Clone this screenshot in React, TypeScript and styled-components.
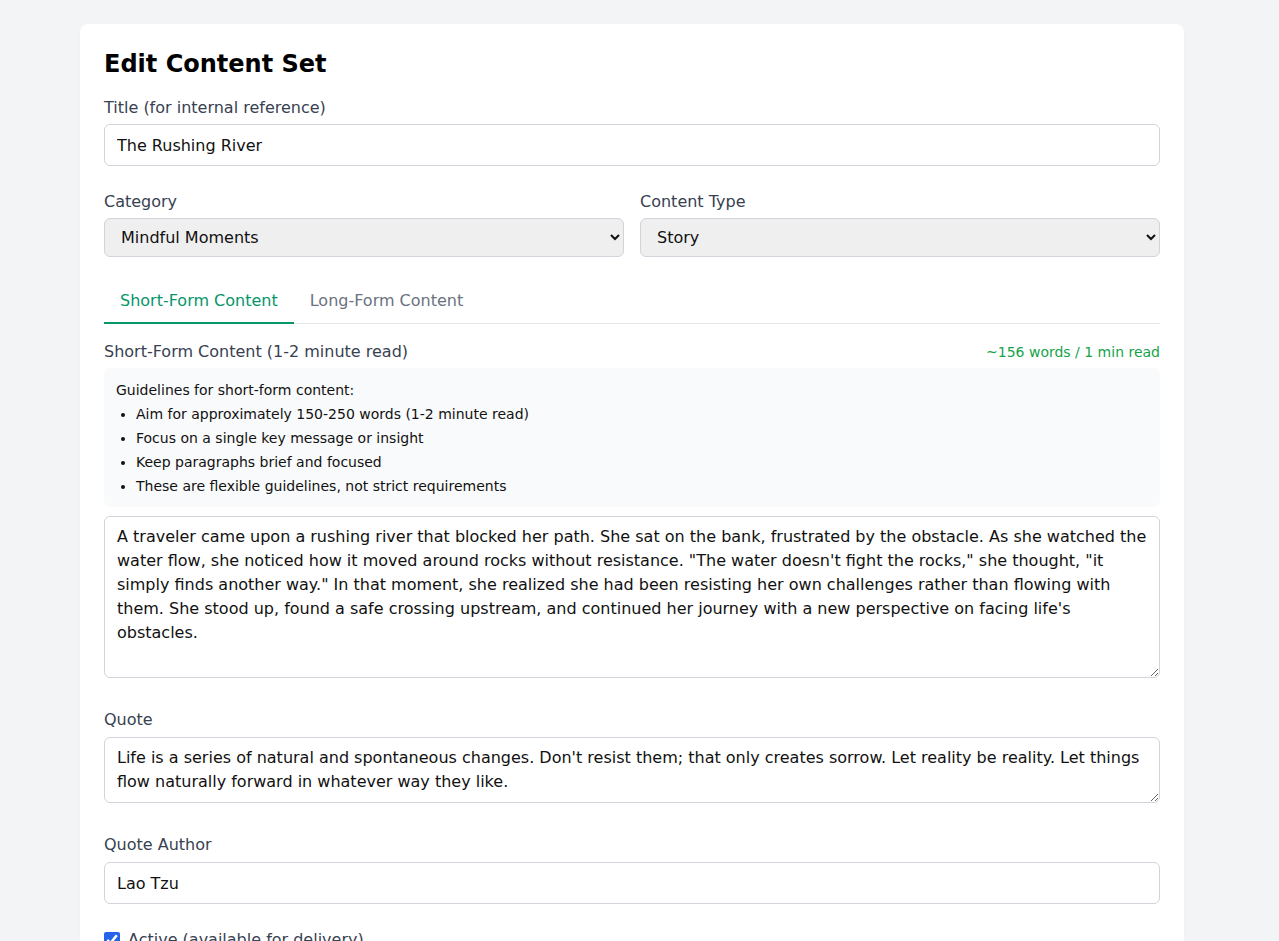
import React, { useState } from "react";
import styled, { createGlobalStyle } from "styled-components";

const GlobalStyle = createGlobalStyle`
  html, body {
    margin: 0;
    padding: 0;
    background: #f3f4f6;
  }
  body {
    padding-right: 15px;
    font-family: "DejaVu Sans", sans-serif;
    color: #111827;
  }
  * { box-sizing: border-box; }
`;

const Page = styled.div`
  max-width: 1152px;
  margin: 0 auto;
  padding: 24px;
`;

const Card = styled.div`
  background: #ffffff;
  border-radius: 8px;
  box-shadow: 0 1px 2px rgba(0, 0, 0, 0.04);
  padding: 24px;
`;

const Heading = styled.h1`
  margin: 0 0 16px;
  font-size: 24px;
  line-height: 32px;
  font-weight: 700;
  color: #000;
`;

const Field = styled.div<{ $mb?: number }>`
  margin-bottom: ${(p) => p.$mb ?? 24}px;
`;

const Label = styled.label<{ $gap?: number }>`
  display: block;
  font-size: 16px;
  line-height: 24px;
  color: #374151;
  margin-bottom: ${(p) => p.$gap ?? 5}px;
`;

const TextInput = styled.input`
  display: block;
  width: 100%;
  height: 42px;
  padding: 8px 12px;
  font-family: "DejaVu Sans", sans-serif;
  font-size: 16px;
  line-height: 24px;
  color: #111;
  border: 1px solid #d1d5db;
  border-radius: 6px;
  background: #fff;
  outline: none;
`;

const Grid = styled.div`
  display: grid;
  grid-template-columns: 1fr 1fr;
  gap: 16px;
  margin-bottom: 25px;
`;

const Select = styled.select`
  display: block;
  width: 100%;
  height: 39px;
  padding: 6px 12px;
  font-family: "DejaVu Sans", sans-serif;
  font-size: 16px;
  color: #111;
  border: 1px solid #d1d5db;
  border-radius: 6px;
  background-color: #efefef;
  outline: none;
`;

const Tabs = styled.div`
  display: flex;
  border-bottom: 1px solid #e5e7eb;
  margin-bottom: 16px;
`;

const Tab = styled.button<{ $active?: boolean }>`
  font-family: "DejaVu Sans", sans-serif;
  font-size: 16px;
  line-height: 24px;
  padding: 7px 16px 9px;
  background: none;
  border: none;
  margin-bottom: -1px;
  border-bottom: 2px solid ${(p) => (p.$active ? "#059669" : "transparent")};
  color: ${(p) => (p.$active ? "#059669" : "#6b7280")};
  cursor: pointer;
`;

const LabelRow = styled.div`
  display: flex;
  justify-content: space-between;
  align-items: baseline;
  margin-bottom: 4px;
`;

const RowLabel = styled.label`
  font-size: 16px;
  line-height: 24px;
  color: #374151;
`;

const Count = styled.span`
  font-size: 14px;
  line-height: 20px;
  color: #16a34a;
`;

const Guide = styled.div`
  background: #f9fafb;
  border-radius: 6px;
  padding: 12px 12px 11px;
  font-size: 14px;
  line-height: 20px;
  color: #111;
  margin-bottom: 9px;
`;

const GuideList = styled.ul`
  margin: 4px 0 0;
  padding-left: 20px;
  list-style: disc;
  li {
    margin-top: 4px;
  }
  li:first-child {
    margin-top: 0;
  }
`;

const TextArea = styled.textarea`
  display: block;
  width: 100%;
  margin: 0;
  padding: 8px 12px;
  font-family: "DejaVu Sans", sans-serif;
  font-size: 16px;
  line-height: 24px;
  color: #111;
  border: 1px solid #d1d5db;
  border-radius: 6px;
  background: #fff;
  resize: vertical;
  outline: none;
`;

const CheckRow = styled.label`
  display: flex;
  align-items: center;
  gap: 8px;
  font-size: 16px;
  line-height: 24px;
  color: #374151;
  margin-bottom: 24px;
`;

const Check = styled.input`
  width: 16px;
  height: 16px;
  margin: 0;
  accent-color: #2563eb;
`;

const Actions = styled.div`
  display: flex;
  justify-content: flex-end;
  gap: 12px;
`;

const Button = styled.button<{ $primary?: boolean }>`
  font-family: "DejaVu Sans", sans-serif;
  font-size: 16px;
  line-height: 24px;
  padding: 8px 16px;
  border-radius: 6px;
  border: 1px solid ${(p) => (p.$primary ? "#059669" : "#d1d5db")};
  background: ${(p) => (p.$primary ? "#059669" : "#fff")};
  color: ${(p) => (p.$primary ? "#fff" : "#374151")};
`;

const story =
  "A traveler came upon a rushing river that blocked her path. She sat on the bank, frustrated by the obstacle. As she watched the water flow, she noticed how it moved around rocks without resistance. \"The water doesn't fight the rocks,\" she thought, \"it simply finds another way.\" In that moment, she realized she had been resisting her own challenges rather than flowing with them. She stood up, found a safe crossing upstream, and continued her journey with a new perspective on facing life's obstacles.";

const quote =
  "Life is a series of natural and spontaneous changes. Don't resist them; that only creates sorrow. Let reality be reality. Let things flow naturally forward in whatever way they like.";

export default function App() {
  const [tab, setTab] = useState<"short" | "long">("short");
  return (
    <>
      <GlobalStyle />
      <Page>
        <Card>
          <Heading>Edit Content Set</Heading>
          <Field>
            <Label $gap={4}>Title (for internal reference)</Label>
            <TextInput defaultValue="The Rushing River" />
          </Field>
          <Grid>
            <div>
              <Label $gap={4}>Category</Label>
              <Select defaultValue="mindful">
                <option value="mindful">Mindful Moments</option>
              </Select>
            </div>
            <div>
              <Label $gap={4}>Content Type</Label>
              <Select defaultValue="story">
                <option value="story">Story</option>
              </Select>
            </div>
          </Grid>
          <Tabs>
            <Tab $active={tab === "short"} onClick={() => setTab("short")}>
              Short-Form Content
            </Tab>
            <Tab $active={tab === "long"} onClick={() => setTab("long")}>
              Long-Form Content
            </Tab>
          </Tabs>
          <Field $mb={30}>
            <LabelRow>
              <RowLabel>Short-Form Content (1-2 minute read)</RowLabel>
              <Count>~156 words / 1 min read</Count>
            </LabelRow>
            <Guide>
              <div>Guidelines for short-form content:</div>
              <GuideList>
                <li>Aim for approximately 150-250 words (1-2 minute read)</li>
                <li>Focus on a single key message or insight</li>
                <li>Keep paragraphs brief and focused</li>
                <li>These are flexible guidelines, not strict requirements</li>
              </GuideList>
            </Guide>
            <TextArea rows={6} defaultValue={story} />
          </Field>
          <Field $mb={30}>
            <Label>Quote</Label>
            <TextArea rows={2} defaultValue={quote} />
          </Field>
          <Field>
            <Label>Quote Author</Label>
            <TextInput defaultValue="Lao Tzu" />
          </Field>
          <CheckRow>
            <Check type="checkbox" defaultChecked />
            Active (available for delivery)
          </CheckRow>
          <Actions>
            <Button>Cancel</Button>
            <Button $primary>Save Changes</Button>
          </Actions>
        </Card>
      </Page>
    </>
  );
}
